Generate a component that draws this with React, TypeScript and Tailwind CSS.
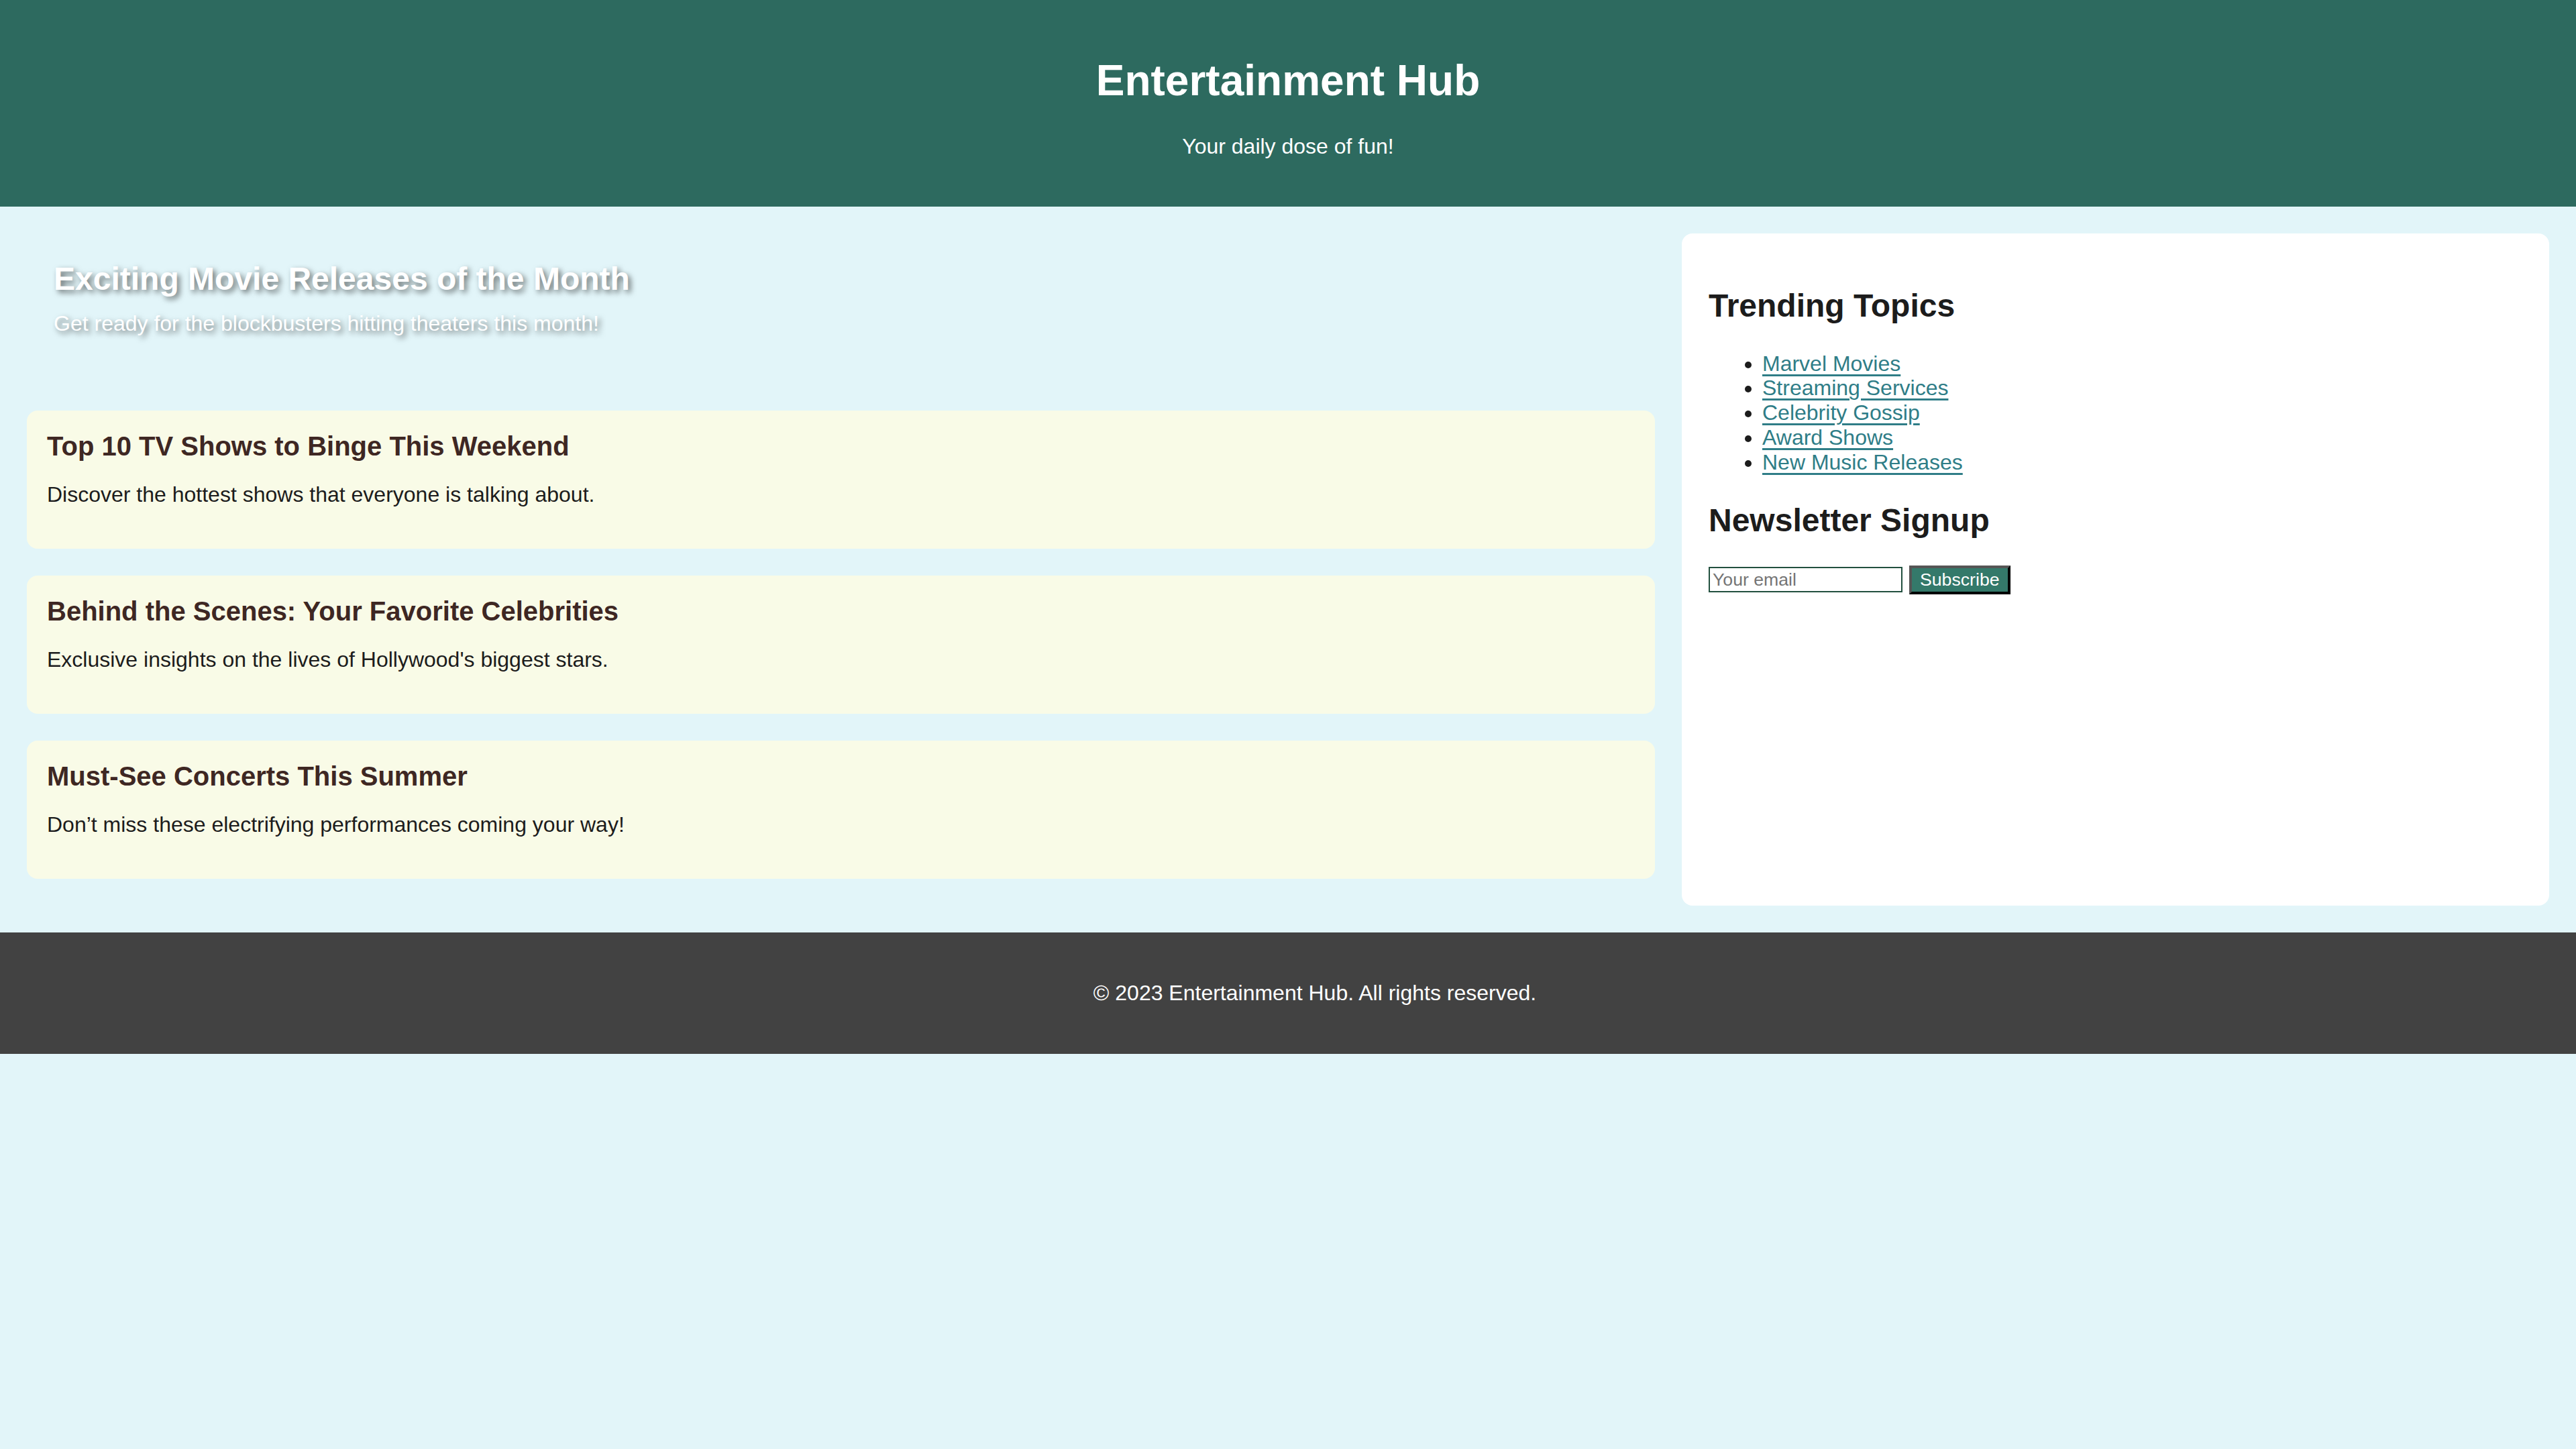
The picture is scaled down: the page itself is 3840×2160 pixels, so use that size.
const cards = [
  {
    title: "Top 10 TV Shows to Binge This Weekend",
    text: "Discover the hottest shows that everyone is talking about.",
  },
  {
    title: "Behind the Scenes: Your Favorite Celebrities",
    text: "Exclusive insights on the lives of Hollywood's biggest stars.",
  },
  {
    title: "Must-See Concerts This Summer",
    text: "Don’t miss these electrifying performances coming your way!",
  },
];

const topics = [
  "Marvel Movies",
  "Streaming Services",
  "Celebrity Gossip",
  "Award Shows",
  "New Music Releases",
];

const Header = () => (
  <header className="bg-[#2d6a5f] py-[40px] text-center text-white">
    <h1 className="mt-[44px] mb-[42px] text-[64px] font-bold">Entertainment Hub</h1>
    <p className="mb-[32px] text-[32px]">Your daily dose of fun!</p>
  </header>
);

const Hero = () => (
  <section className="mb-[40px] p-[40px] text-white [text-shadow:4px_4px_8px_rgba(0,0,0,0.55)]">
    <h2 className="mb-[20px] text-[48px] font-bold">Exciting Movie Releases of the Month</h2>
    <p className="mb-[32px] text-[32px]">Get ready for the blockbusters hitting theaters this month!</p>
  </section>
);

const Card = ({ title, text }: { title: string; text: string }) => (
  <article className="mb-[40px] rounded-[16px] bg-[#f9fbe7] p-[30px]">
    <h3 className="text-[40px] font-bold text-[#3e2723]">{title}</h3>
    <p className="mt-[31px] mb-[32px] text-[32px] text-[#1c1c1c]">{text}</p>
  </article>
);

const Sidebar = () => (
  <aside className="w-[1293px] shrink-0 rounded-[16px] bg-white p-[40px] text-[#1c1c1c]">
    <h2 className="mt-[40px] mb-[40px] text-[48px] font-bold">Trending Topics</h2>
    <ul className="list-disc pl-[80px] text-[32px]">
      {topics.map((t) => (
        <li key={t}>
          <a href="#" className="text-[#2f7d87] underline decoration-[3px] underline-offset-[5px]">
            {t}
          </a>
        </li>
      ))}
    </ul>
    <h2 className="mt-[40px] mb-[40px] text-[48px] font-bold">Newsletter Signup</h2>
    <form className="flex items-center gap-[10px]" onSubmit={(e) => e.preventDefault()}>
      <input
        type="email"
        placeholder="Your email"
        className="h-[38px] w-[289px] border-2 border-[#22503f] bg-white px-[4px] text-[26.67px] text-black placeholder:text-[#757575]"
      />
      <button
        type="submit"
        className="h-[43px] border-4 border-t-[#555555] border-l-[#555555] border-r-black border-b-black bg-[#34796a] px-[12px] text-[26.67px] text-white"
      >
        Subscribe
      </button>
    </form>
  </aside>
);

export default function App() {
  return (
    <div className="min-h-screen bg-[#e2f5f9] font-['Liberation_Sans',Arial,sans-serif] leading-[1.15]">
      <Header />
      <main className="flex gap-[40px] p-[40px]">
        <div className="w-[2427px] shrink-0">
          <Hero />
          {cards.map((c) => (
            <Card key={c.title} title={c.title} text={c.text} />
          ))}
        </div>
        <Sidebar />
      </main>
      <footer className="bg-[#424242] py-[40px] pl-[80px] text-center text-white">
        <p className="my-[32px] text-[32px]">© 2023 Entertainment Hub. All rights reserved.</p>
      </footer>
    </div>
  );
}
